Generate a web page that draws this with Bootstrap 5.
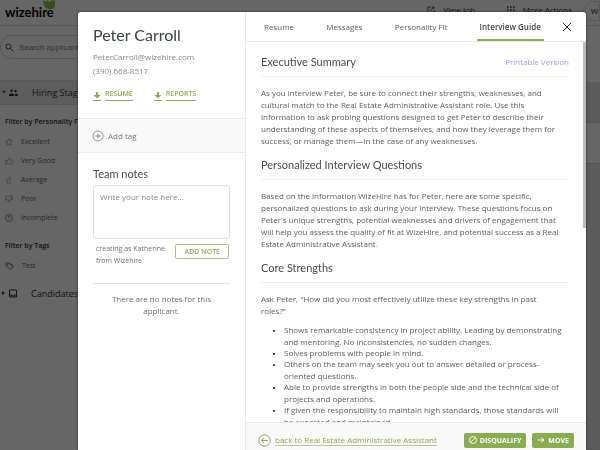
<!DOCTYPE html>
<html lang="en">
<head>
<meta charset="utf-8">
<meta name="viewport" content="width=device-width, initial-scale=1">
<title>Peter Carroll – Wizehire</title>
<link href="https://cdn.jsdelivr.net/npm/bootstrap@5.3.0/dist/css/bootstrap.min.css" rel="stylesheet">
<style>
:root { --leaf: #8aad4f; --ink: #484c4e; --rule: #ececec; }
body { font: 8px/12px "Open Sans", sans-serif; color: #5c5c5c; height: 100vh; overflow: hidden; }
h1, h2, h3, p, ul { margin: 0; }
a { color: inherit; }
svg { display: block; flex: none; fill: none; stroke: currentColor; }
/* page behind the dialog */
.backpage { height: 100vh; background: #fff; }
.topbar { height: 26px; border-bottom: 1px solid #dcdcdc; padding: 0 0 0 5px; flex: none; }
.brand { font: 700 13px/16px Lato, sans-serif; color: #000; height: 20px; padding-top: 4px; }
.brand svg { position: absolute; left: 37px; top: 0; fill: #8cc63f; stroke: none; }
.topbar-links { color: #333; gap: 32px; padding-top: 4px; }
.account { border: 1px solid #ddd; border-radius: 12px 0 0 12px; height: 20px; width: 17px; margin: -3px 0 0 -21px; padding: 3px 0 0 7px; background: #fff; overflow: hidden; }
.side { width: 30%; }
.search { height: 24px; margin: 9px 0 22px; border: 1px solid #d5d5d5; border-radius: 12px; padding-left: 4px; gap: 5px; color: #444; }
.search input { border: 0; background: none; font: 8px "Liberation Sans", sans-serif; padding: 0; outline: 0; }
.search input::placeholder { color: #888; }
.stage { height: 23px; font: 9px/12px "Open Sans", sans-serif; color: #333; padding-left: 2px; }
.stage.on { background: #e9e9e9; box-shadow: 0 1px #ddd, 0 -1px #ddd; }
.stage span { padding-left: 13px; }
.filters { padding-left: 5px; color: #666; }
.filters h3 { font: 600 7px/12px "Open Sans", sans-serif; color: #333; white-space: nowrap; }
.filters li { height: 12px; margin-bottom: 7px; font-size: 7px; gap: 8px; }
.stripe { background: #e7e7e7; border-bottom: 1px solid #d2d2d2; }
.plain { height: 41px; border-bottom: 1px solid #ccc; }
.dim { position: fixed; inset: 0; background: rgba(0,0,0,.6); padding: 12px 14px 0 78px; }
/* dialog */
.panel { background: #fff; border-radius: 3px 3px 0 0; overflow: hidden; box-shadow: 0 0 3px rgba(0,0,0,.6); }
.profile { width: 168px; border-right: 1px solid #e8e8e8; }
.profile-top { height: 106px; padding: 14px 15px 0; color: #858585; }
h1 { font: 16px/18px Lato, sans-serif; color: #3c4448; margin-bottom: 6px; }
.profile-top p { line-height: 14px; }
.downloads { gap: 21px; margin-top: 10px; color: var(--leaf); }
.downloads a { gap: 4px; font: 600 7px/12px "Open Sans", sans-serif; text-decoration: none; }
.downloads span { border-bottom: 1px solid; }
.tagrow { height: 35px; background: #f9f9f9; border: solid #e9e9e9; border-width: 1px 0; padding: 0 14px; color: #777; }
.tagrow button, .shut { border: 0; background: none; padding: 0; color: inherit; }
.notes { padding: 14px 15px; }
h2 { font: 11px/14px Lato, sans-serif; color: var(--ink); }
.notes h2 { margin-bottom: 4px; }
.notes textarea { display: block; width: 100%; height: 54px; border: 1px solid #dedede; border-radius: 3px; padding: 5px 6px; font: 8px/12px "Open Sans", sans-serif; resize: none; outline: 0; }
.notes textarea::placeholder { color: #888; }
.byline { font-size: 7px; padding: 4px 1px 0 3px; color: #707070; }
.outline-btn { border: 1px solid #a9c681; border-radius: 2px; background: #fff; color: var(--leaf); font: 600 7px/13px "Open Sans", sans-serif; padding: 0 8px; margin-top: 1px; height: 15px; }
.empty { border-top: 1px solid #e2e2e2; margin-top: 16px; padding-top: 9px; text-align: center; color: #6c6c6c; }
.tabs { height: 30px; border-bottom: 1px solid #e6e6e6; padding: 0 14px 0 15px; }
.tabs a { text-decoration: none; padding: 9px 3px 0; white-space: nowrap; height: 29px; }
.tabs a.active { font-weight: 600; color: #444; border-bottom: 2px solid var(--leaf); margin-right: -8px; }
.guide { overflow: auto; scrollbar-width: none; padding: 13px 17px 0 15px; }
.guide::-webkit-scrollbar { display: none; }
.guide header { border-bottom: 1px solid var(--rule); padding-bottom: 7px; margin-bottom: 10px; }
.guide p { margin-bottom: 11px; }
.guide .ask { margin-bottom: 7px; }
.guide ul { padding-left: 23px; }
.guide li + li { margin-top: -1px; }
.guide li::marker { color: #111; font-size: 7px; }
.thumb { position: absolute; right: 0; top: 0; width: 3px; height: 49%; background: #bcbcbc; }
.foot { height: 28px; background: #f9f9f9; border-top: 1px solid #ececec; padding: 7px 12px 0; color: var(--leaf); }
.foot a { text-decoration: none; gap: 4px; }
.foot a span { border-bottom: 1px solid #b5cd93; line-height: 11px; white-space: nowrap; }
.foot-buttons { gap: 6px; }
.solid-btn { border: 0; border-radius: 2px; background: var(--leaf); color: #fff; font: 700 7px/15px "Open Sans", sans-serif; padding: 0 5px; height: 15px; gap: 3px; }
</style>
<script src="https://cdn.jsdelivr.net/npm/bootstrap@5.3.0/dist/js/bootstrap.bundle.min.js"></script>
</head>
<body>
<div class="backpage d-flex flex-column">
  <div class="topbar d-flex justify-content-between align-items-start">
    <div class="brand position-relative">wizehire<svg width="14" height="10" viewBox="0 0 14 10"><path d="M1 0 4 2 5 0 8 2 10 0 13 1V6Q12 9 9 9H6Q1 7 1 0Z"/></svg></div>
    <div class="topbar-links d-flex">
      <span class="d-flex gap-2"><svg width="8" height="12" viewBox="0 -2 8 12"><path stroke-width=".8" d="M4 1H1V7H7V4M5 1H7V3M7 1 3 5"/></svg>View Job</span>
      <span class="d-flex gap-2"><svg width="8" height="12" viewBox="0 -2 8 12"><path stroke-width="1.600" stroke-dasharray="1.600 1.400" d="M0 1H8M0 4H8M0 7H8"/></svg>More Actions</span>
      <span class="account">W</span>
    </div>
  </div>
  <div class="d-flex flex-fill">
    <div class="side">
      <label class="search d-flex align-items-center"><svg width="9" height="9" viewBox="0 0 9 9"><circle cx="3.500" cy="3.500" r="2.500"/><path d="m5.500 5.500 3 3"/></svg><input type="search" placeholder="Search applicants" aria-label="Search applicants"></label>
      <div class="stage on d-flex align-items-center"><svg width="17" height="9" viewBox="0 0 17 9"><path fill="currentColor" stroke="none" d="M0 3H4L2 5ZM7 8V6.500Q9.500 4.500 12 6.500V8ZM13 8V6L15 5.500 16 7V8Z"/><circle cx="9.500" cy="2.700" r="1.300" fill="currentColor" stroke="none"/><circle cx="13.500" cy="3" r="1.200" fill="currentColor" stroke="none"/></svg><span>Hiring Stages</span></div>
      <div class="filters">
        <h3 class="pt-1 mt-2">Filter by Personality Fit</h3>
        <ul class="list-unstyled mt-2">
          <li class="d-flex align-items-center"><svg style="color:#6fb584" width="8" height="8" viewBox="0 0 8 8"><path stroke-width=".7" d="m4 .5 1 2.300 2.500.2-1.900 1.700.6 2.600L4 6 1.800 7.300l.6-2.600L.5 3 3 2.800Z"/></svg>Excellent</li>
          <li class="d-flex align-items-center"><svg style="color:#8fbb96" width="8" height="8" viewBox="0 0 8 8"><path stroke-width=".7" d="M.5 3.500H2V7H.5ZM2 4 4 1Q5 1 4.500 3H7.500L6.800 7H2"/></svg>Very Good</li>
          <li class="d-flex align-items-center"><svg style="color:#d3ac5c" width="8" height="8" viewBox="0 0 8 8"><path stroke-width=".7" d="M5 .5V7L2 7.500 3 5 1 3.500 4 3Z"/></svg>Average</li>
          <li class="d-flex align-items-center"><svg style="color:#cb8f8f" width="8" height="8" viewBox="0 0 8 8"><path stroke-width=".7" d="M7.500 4.500H6V1H7.500ZM6 4 4 7Q3 7 3.500 5H.5L1.200 1H6"/></svg>Poor</li>
          <li class="d-flex align-items-center"><svg width="8" height="8" viewBox="0 0 8 8"><circle cx="4" cy="4" r="3.500" stroke-width=".7"/><path stroke-width=".7" d="M3 3.200Q3 2.200 4 2.200T5 3.200Q5 3.800 4 4.300V5M4 5.500V6"/></svg>Incomplete</li>
        </ul>
        <h3 class="mt-3 pt-0">Filter by Tags</h3>
        <ul class="list-unstyled mt-2 mb-2"><li class="d-flex align-items-center"><svg width="9" height="8" viewBox="0 0 9 8"><path stroke-width=".8" d="M1 1H4L8 5 5.500 7.500 1 4ZM5 1 8.500 4.500"/><circle cx="2.500" cy="2.500" r=".5"/></svg>Test</li></ul>
      </div>
      <div class="stage d-flex align-items-center mt-1 pt-1"><svg width="16" height="9" viewBox="0 0 16 9"><path fill="currentColor" stroke="none" d="M0 2 3 4 0 6Z"/><path d="M7.500 1H14.500V8H7.500ZM7.500 6H9.500L10 7H12L12.500 6H14.500"/></svg><span>Candidates</span></div>
    </div>
    <div class="flex-fill d-flex flex-column">
      <div class="mt-5 pt-1"></div>
      <div class="stripe pt-4 pb-3 mt-1"></div>
      <div class="plain"></div>
      <div class="stripe flex-fill"></div>
    </div>
  </div>
</div>

<div class="dim d-flex">
  <div class="panel d-flex flex-fill" role="dialog" aria-label="Peter Carroll">
    <aside class="profile flex-shrink-0">
      <div class="profile-top">
        <h1>Peter Carroll</h1>
        <p>PeterCarroll@wizehire.com</p>
        <p>(390) 668-8517</p>
        <div class="downloads d-flex">
          <a class="d-flex align-items-end" href="#resume"><svg width="8" height="10" viewBox="0 0 8 10"><path fill="currentColor" stroke="none" d="M3 1H5V4H7.500L4 7.500.5 4H3ZM0 9H8V10H0Z"/></svg><span>RESUME</span></a>
          <a class="d-flex align-items-end" href="#reports"><svg width="8" height="10" viewBox="0 0 8 10"><path fill="currentColor" stroke="none" d="M3 1H5V4H7.500L4 7.500.5 4H3ZM0 9H8V10H0Z"/></svg><span>REPORTS</span></a>
        </div>
      </div>
      <div class="tagrow d-flex align-items-center">
        <button type="button" class="d-flex align-items-center gap-1"><svg width="12" height="12" viewBox="0 0 12 12"><circle cx="6" cy="6" r="5" stroke-width=".8"/><path stroke-width=".9" d="M6 3.500V8.500M3.500 6H8.500"/></svg>Add tag</button>
      </div>
      <div class="notes">
        <h2>Team notes</h2>
        <textarea placeholder="Write your note here..." aria-label="Team note"></textarea>
        <div class="byline d-flex justify-content-between align-items-start">
          <span>creating as Katherine<br>from Wizehire</span>
          <button type="button" class="outline-btn">ADD NOTE</button>
        </div>
        <p class="empty">There are no notes for this<br>applicant.</p>
      </div>
    </aside>
    <main class="d-flex flex-column flex-fill">
      <nav class="tabs d-flex justify-content-between flex-shrink-0">
        <a href="#resume">Resume</a><a href="#messages">Messages</a><a href="#personality">Personality Fit</a><a class="active" href="#guide" aria-current="page">Interview Guide</a>
        <button type="button" class="shut" aria-label="Close"><svg width="10" height="10" viewBox="0 0 10 10"><path stroke="#333" d="M1 1 9 9M9 1 1 9"/></svg></button>
      </nav>
      <div class="position-relative d-flex flex-fill overflow-hidden">
        <div class="guide flex-fill">
          <header class="d-flex justify-content-between align-items-center"><h2>Executive Summary</h2><a class="text-decoration-none lh-1" href="#print" style="color:#9d98ee">Printable Version</a></header>
          <p>As you interview Peter, be sure to connect their strengths, weaknesses, and<br>cultural match to the Real Estate Administrative Assistant role. Use this<br>information to ask probing questions designed to get Peter to describe their<br>understanding of these aspects of themselves, and how they leverage them for<br>success, or manage them—in the case of any weaknesses.</p>
          <header><h2>Personalized Interview Questions</h2></header>
          <p>Based on the information WizeHire has for Peter, here are some specific,<br>personalized questions to ask during your interview. These questions focus on<br>Peter's unique strengths, potential weaknesses and drivers of engagement that<br>will help you assess the quality of fit at WizeHire, and potential success as a Real<br>Estate Administrative Assistant.</p>
          <header><h2>Core Strengths</h2></header>
          <p class="ask">Ask Peter, "How did you most effectively utilize these key strengths in past<br>roles?"</p>
          <ul>
            <li>Shows remarkable consistency in project ability. Leading by demonstrating<br>and mentoring. No inconsistencies, no sudden changes.</li>
            <li>Solves problems with people in mind.</li>
            <li>Others on the team may seek you out to answer detailed or process-<br>oriented questions.</li>
            <li>Able to provide strengths in both the people side and the technical side of<br>projects and operations.</li>
            <li>If given the responsibility to maintain high standards, those standards will<br>be expected and maintained.</li>
          </ul>
        </div>
        <div class="thumb"></div>
      </div>
      <footer class="foot d-flex justify-content-between align-items-center flex-shrink-0">
        <a class="d-flex align-items-center" href="#back"><svg width="13" height="13" viewBox="0 0 13 13"><circle cx="6.500" cy="6.500" r="5.700"/><path d="M10 6.500H3.500M6 4 3.500 6.500 6 9"/></svg><span>back to Real Estate Administrative Assistant</span></a>
        <div class="foot-buttons d-flex">
          <button type="button" class="solid-btn d-flex align-items-center"><svg width="8" height="8" viewBox="0 0 8 8"><circle cx="4" cy="4" r="3.500" stroke-width=".9"/><path stroke-width=".9" d="M6.500 1.500 1.500 6.500"/></svg>DISQUALIFY</button>
          <button type="button" class="solid-btn d-flex align-items-center"><svg width="8" height="8" viewBox="0 0 8 8"><path d="M1 4H7M4.500 1.500 7 4 4.500 6.500"/></svg>MOVE</button>
        </div>
      </footer>
    </main>
  </div>
</div>
</body>
</html>
